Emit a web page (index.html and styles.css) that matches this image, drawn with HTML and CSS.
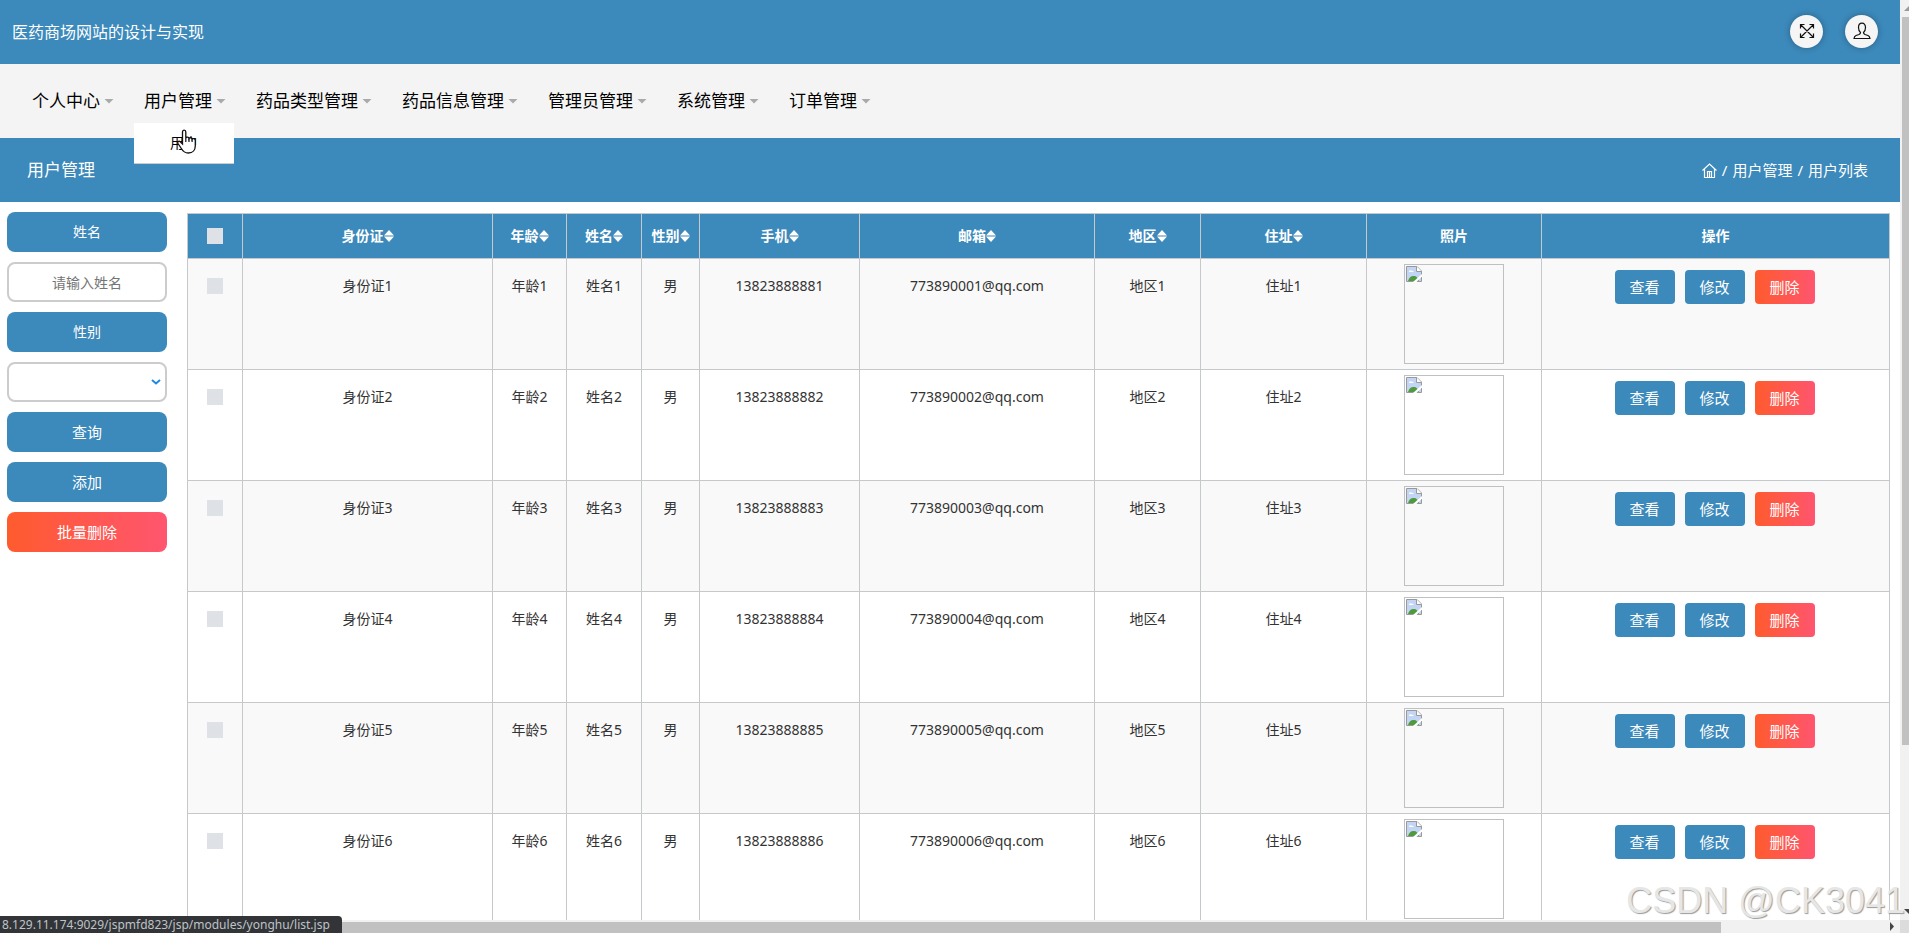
FILE: index.html
```html
<!DOCTYPE html>
<html lang="zh-CN">
<head>
<meta charset="utf-8">
<title>用户管理</title>
<link rel="stylesheet" href="styles.css">
</head>
<body>
<svg class="defs" aria-hidden="true">
  <symbol id="sort" viewBox="0 0 10 12"><path d="M5 0l5 5.500H0zM0 6.500h10L5 12z"/></symbol>
  <symbol id="broken" viewBox="0 0 16 16">
    <path d="M.5.500H11L15.500 5v10.500H.500z" fill="#fff" stroke="#999"/>
    <path d="M1 1h9.500v5H15v9H1z" fill="#c3d5f5"/>
    <path d="M3 6c0-2 2-2.300 2.700-1.200C7.200 4.300 8 5.300 7.500 6z" fill="#fff"/>
    <path d="M2 15c1-3.500 3.500-5.500 6-5 2.500 0 4 2 5 5z" fill="#4f9a3c"/>
    <path d="M10.500.500V5.500h5" fill="#fff" stroke="#999"/>
    <path d="M16 8v2.500L10.500 16H7z" fill="#fff"/>
  </symbol>
</svg>
<div class="frame">
  <div class="view">
    <header class="top">
      <h1 class="brand">医药商场网站的设计与实现</h1>
      <div class="tools">
        <button class="round" type="button" aria-label="全屏"><svg viewBox="0 0 16 16" width="16" height="16"><path d="M1.500 1.500l13 13M14.500 1.500l-13 13M1.500 5.500v-4h4M10.500 1.500h4v4M14.500 10.500v4h-4M5.500 14.500h-4v-4"/></svg></button>
        <button class="round" type="button" aria-label="用户"><svg viewBox="0 0 18 18" width="18" height="18"><path d="M7.500 10.500c0 1-.500 1.500-1.500 2l-3 1c-1.300.500-1.800 1.500-2 3h16c-.200-1.500-.700-2.500-2-3l-3-1c-1-.500-1.500-1-1.500-2 1.200-1 2-2.800 2-5C12.500 2.700 11.200 1.200 9 1.200S5.500 2.700 5.500 5.500c0 2.200.800 4 2 5z"/></svg></button>
      </div>
    </header>
    <nav class="nav">
      <ul class="menu">
        <li><a href="#">个人中心</a></li>
        <li><a href="#">用户管理</a>
          <ul class="drop"><li><a href="#">用户</a></li></ul>
        </li>
        <li><a href="#">药品类型管理</a></li>
        <li><a href="#">药品信息管理</a></li>
        <li><a href="#">管理员管理</a></li>
        <li><a href="#">系统管理</a></li>
        <li><a href="#">订单管理</a></li>
      </ul>
    </nav>
    <div class="titlebar">
      <h2 class="title">用户管理</h2>
      <div class="crumbs">
        <a href="#" aria-label="首页"><svg viewBox="0 0 15 15" width="15" height="15"><path d="M.500 7.500l7-6.500 7 6.500M2.500 6v8.500h10V6M5.500 14V8.500h4V14M7.500 9v5"/></svg></a>
        <span>/</span><a href="#">用户管理</a><span>/</span><span>用户列表</span>
      </div>
    </div>
    <main class="content">
      <form class="side">
        <label class="block tag" for="name">姓名</label>
        <input class="block field" id="name" type="text" placeholder="请输入姓名">
        <label class="block tag" for="sex">性别</label>
        <div class="pick">
          <select class="block field" id="sex"><option></option><option>男</option><option>女</option></select>
          <svg class="chevron" viewBox="0 0 10 6" width="10" height="6"><path d="M1 1l4 3.500L9 1"/></svg>
        </div>
        <button class="block" type="button">查询</button>
        <button class="block" type="button">添加</button>
        <button class="block danger" type="button">批量删除</button>
      </form>
      <table class="list">
        <colgroup><col class="c-check"><col class="c-id"><col class="c-age"><col class="c-name"><col class="c-sex"><col class="c-phone"><col class="c-mail"><col class="c-area"><col class="c-addr"><col class="c-photo"><col class="c-act"></colgroup>
        <thead>
          <tr>
            <th><input type="checkbox" aria-label="全选"></th>
            <th>身份证<svg class="sort"><use href="#sort"/></svg></th>
            <th>年龄<svg class="sort"><use href="#sort"/></svg></th>
            <th>姓名<svg class="sort"><use href="#sort"/></svg></th>
            <th>性别<svg class="sort"><use href="#sort"/></svg></th>
            <th>手机<svg class="sort"><use href="#sort"/></svg></th>
            <th>邮箱<svg class="sort"><use href="#sort"/></svg></th>
            <th>地区<svg class="sort"><use href="#sort"/></svg></th>
            <th>住址<svg class="sort"><use href="#sort"/></svg></th>
            <th>照片</th>
            <th>操作</th>
          </tr>
        </thead>
        <tbody>
          <tr><td><input type="checkbox" aria-label="选择1"></td><td>身份证1</td><td>年龄1</td><td>姓名1</td><td>男</td><td>13823888881</td><td>773890001@qq.com</td><td>地区1</td><td>住址1</td><td class="photo"><div class="pic"><svg width="16" height="16"><use href="#broken"/></svg></div></td><td class="act"><div class="acts"><button type="button">查看</button><button type="button">修改</button><button class="danger" type="button">删除</button></div></td></tr>
          <tr><td><input type="checkbox" aria-label="选择2"></td><td>身份证2</td><td>年龄2</td><td>姓名2</td><td>男</td><td>13823888882</td><td>773890002@qq.com</td><td>地区2</td><td>住址2</td><td class="photo"><div class="pic"><svg width="16" height="16"><use href="#broken"/></svg></div></td><td class="act"><div class="acts"><button type="button">查看</button><button type="button">修改</button><button class="danger" type="button">删除</button></div></td></tr>
          <tr><td><input type="checkbox" aria-label="选择3"></td><td>身份证3</td><td>年龄3</td><td>姓名3</td><td>男</td><td>13823888883</td><td>773890003@qq.com</td><td>地区3</td><td>住址3</td><td class="photo"><div class="pic"><svg width="16" height="16"><use href="#broken"/></svg></div></td><td class="act"><div class="acts"><button type="button">查看</button><button type="button">修改</button><button class="danger" type="button">删除</button></div></td></tr>
          <tr><td><input type="checkbox" aria-label="选择4"></td><td>身份证4</td><td>年龄4</td><td>姓名4</td><td>男</td><td>13823888884</td><td>773890004@qq.com</td><td>地区4</td><td>住址4</td><td class="photo"><div class="pic"><svg width="16" height="16"><use href="#broken"/></svg></div></td><td class="act"><div class="acts"><button type="button">查看</button><button type="button">修改</button><button class="danger" type="button">删除</button></div></td></tr>
          <tr><td><input type="checkbox" aria-label="选择5"></td><td>身份证5</td><td>年龄5</td><td>姓名5</td><td>男</td><td>13823888885</td><td>773890005@qq.com</td><td>地区5</td><td>住址5</td><td class="photo"><div class="pic"><svg width="16" height="16"><use href="#broken"/></svg></div></td><td class="act"><div class="acts"><button type="button">查看</button><button type="button">修改</button><button class="danger" type="button">删除</button></div></td></tr>
          <tr><td><input type="checkbox" aria-label="选择6"></td><td>身份证6</td><td>年龄6</td><td>姓名6</td><td>男</td><td>13823888886</td><td>773890006@qq.com</td><td>地区6</td><td>住址6</td><td class="photo"><div class="pic"><svg width="16" height="16"><use href="#broken"/></svg></div></td><td class="act"><div class="acts"><button type="button">查看</button><button type="button">修改</button><button class="danger" type="button">删除</button></div></td></tr>
        </tbody>
      </table>
    </main>
  </div>
  <div class="vbar">
    <svg width="9" height="17" viewBox="0 0 9 17"><path d="M4 11l5-5v5z" fill="#999"/></svg>
    <div class="vthumb"></div>
    <svg width="9" height="17" viewBox="0 0 9 17"><path d="M4 6h5v5z" fill="#444"/></svg>
  </div>
  <div class="hbar">
    <div class="hthumb"></div>
    <svg width="17" height="13" viewBox="0 0 17 13"><path d="M7 2l4 4.500L7 11z" fill="#444"/></svg>
  </div>
  <div class="corner"></div>
</div>
<div class="status">8.129.11.174:9029/jspmfd823/jsp/modules/yonghu/list.jsp</div>
<div class="watermark">CSDN @CK3041</div>
<svg class="pointer" width="20" height="26" viewBox="0 0 20 26"><path d="M5.500 15V3c0-2.500 3.300-2.500 3.300 0v6c.300-1.400 3-1.200 3.200.500.500-1.200 2.900-1 3.100.700.700-1 3.200-.700 3.200 1.500v5c0 4-2.300 7.300-7 7.300-3.500 0-5.300-1.500-7-4.500L1 14.500c-1-1.800 1-3 2.200-1.800z" fill="#fff" stroke="#111" stroke-width="1.300"/><path d="M8.800 9v4M12 9.500v3.500M15.100 10.200V13" fill="none" stroke="#111" stroke-width="1.200"/></svg>
</body>
</html>
```

FILE: styles.css
```css
* {
  box-sizing: border-box;
}

body {
  margin: 0;
  overflow: hidden;
  background: #fff;
  color: #333;
  font: 14px/24px "Noto Sans", "Noto Sans CJK SC", sans-serif;
}

button,
input,
select {
  font: inherit;
}

button {
  padding: 0;
  border: 0;
}

a {
  color: inherit;
  text-decoration: none;
}

ul {
  margin: 0;
  padding: 0;
  list-style: none;
}

.defs {
  position: absolute;
  width: 0;
  height: 0;
}

.frame {
  display: grid;
  grid-template-columns: minmax(0, 1fr) 9px;
  grid-template-rows: minmax(0, 1fr) 13px;
  height: 100vh;
}

.view {
  overflow: hidden;
}

.top,
.titlebar {
  display: flex;
  align-items: center;
  justify-content: space-between;
  height: 64px;
  background: #3c89bb;
  color: #fff;
}

.top {
  padding: 0 22px 0 12px;
}

.brand,
.title {
  margin: 0;
  font-size: 16px;
  font-weight: 400;
}

.tools {
  display: flex;
  gap: 22px;
  padding-bottom: 2px;
}

.round {
  display: grid;
  place-items: center;
  width: 33px;
  height: 33px;
  border-radius: 50%;
  background: #f5f5f5;
  box-shadow: 0 0 6px rgba(0, 0, 0, 0.3);
}

.round svg,
.crumbs svg,
.chevron {
  display: block;
  fill: none;
  stroke: #111;
  stroke-width: 1.2;
}

.nav {
  height: 74px;
  padding: 0 22px;
  background: #f4f4f4;
}

.menu {
  display: flex;
  color: #000;
  font-size: 17px;
}

.menu > li {
  position: relative;
}

.menu > li > a {
  display: flex;
  align-items: center;
  gap: 4px;
  height: 74px;
  padding: 0 20px 0 10px;
}

.menu > li > a::after {
  content: "";
  width: 10px;
  height: 5px;
  background: #aaa;
  clip-path: polygon(0 0, 100% 0, 50% 100%);
}

.drop {
  position: absolute;
  top: 59px;
  left: 0;
  width: 100px;
  background: #fff;
  border-bottom: 1px solid #ccc;
  font-size: 14px;
  line-height: 40px;
  text-align: center;
}

.titlebar {
  padding: 0 32px 0 27px;
}

.title {
  font-size: 17px;
}

.crumbs {
  display: flex;
  align-items: center;
  gap: 5px;
  font-size: 15px;
}

.crumbs svg {
  stroke: #fff;
}

.content {
  display: flex;
  align-items: flex-start;
  gap: 20px;
  padding: 10px 10px 0 7px;
}

.side {
  display: flex;
  flex: none;
  flex-direction: column;
  gap: 10px;
  width: 160px;
}

.block {
  display: block;
  width: 100%;
  height: 40px;
  border-radius: 8px;
  background: #3c89bb;
  color: #fff;
  font-size: 15px;
  line-height: 40px;
  text-align: center;
}

.tag {
  font-size: 14px;
}

.field {
  padding: 0 8px;
  border: 2px solid #ccc;
  background: #fff;
  color: #333;
  font-size: 14px;
  line-height: 24px;
  appearance: none;
}

.field::placeholder {
  color: #757575;
}

.pick {
  position: relative;
}

.chevron {
  position: absolute;
  top: 17px;
  right: 6px;
  stroke: #1e88e5;
  stroke-width: 2;
}

.list {
  flex: 1;
  width: 100%;
  min-width: 0;
  margin-top: 1px;
  border-collapse: collapse;
  table-layout: fixed;
  text-align: center;
}

.c-check { width: 55px; }
.c-id { width: 250px; }
.c-age { width: 74px; }
.c-name { width: 75px; }
.c-sex { width: 58px; }
.c-phone { width: 160px; }
.c-mail { width: 235px; }
.c-area { width: 106px; }
.c-addr { width: 166px; }
.c-photo { width: 175px; }
.c-act { width: 348px; }

.list th,
.list td {
  padding: 0;
  border: 1px solid #c6c9cb;
}

.list th {
  height: 45px;
  background: #3c89bb;
  color: #fff;
  font-weight: 700;
  white-space: nowrap;
}

.list td {
  padding-top: 15px;
  vertical-align: top;
}

.list tbody tr:nth-child(odd) {
  background: #f9f9f9;
}

.list .photo {
  padding: 5px 0;
}

.list .act {
  padding: 11px 2px 0 0;
}

.list input {
  display: block;
  width: 16px;
  height: 16px;
  margin: 4px auto;
  background: #dee2e6;
  appearance: none;
}

.sort {
  width: 10px;
  height: 12px;
  fill: #fff;
  vertical-align: -1px;
}

.pic {
  width: 100px;
  height: 100px;
  margin: 0 auto;
  padding: 1px;
  border: 1px solid #c0c0c0;
}

.pic svg {
  display: block;
}

.acts {
  display: flex;
  justify-content: center;
  gap: 10px;
}

.acts button {
  width: 60px;
  height: 34px;
  border-radius: 4px;
  background: #3c89bb;
  color: #fff;
  font-size: 15px;
}

.block.danger,
.acts .danger {
  background: linear-gradient(90deg, #ff5b2e, #ff556f);
}

.vbar {
  display: flex;
  flex-direction: column;
  background: #f1f1f1;
}

.vbar svg,
.hbar svg {
  flex: none;
}

.vthumb {
  height: 78vh;
  margin: 0 0 auto 2px;
  background: #c1c1c1;
}

.hbar {
  display: flex;
  align-items: stretch;
  justify-content: space-between;
  background: #f1f1f1;
}

.hthumb {
  width: 90.6%;
  margin-top: 2px;
  background: #c1c1c1;
}

.corner {
  background: #dcdcdc;
}

.status {
  position: absolute;
  bottom: 0;
  left: 0;
  padding: 0 12px 0 2px;
  border-top-right-radius: 4px;
  background: #323438;
  color: #bfc3c7;
  font-size: 12px;
  line-height: 17px;
}

.watermark {
  position: absolute;
  right: 4px;
  bottom: 12px;
  color: #e6e6e6;
  font: 36px/40px "Liberation Sans", sans-serif;
  text-shadow: 1px 1px 1px #999;
}

.pointer {
  position: absolute;
  top: 129px;
  left: 177px;
}
```
